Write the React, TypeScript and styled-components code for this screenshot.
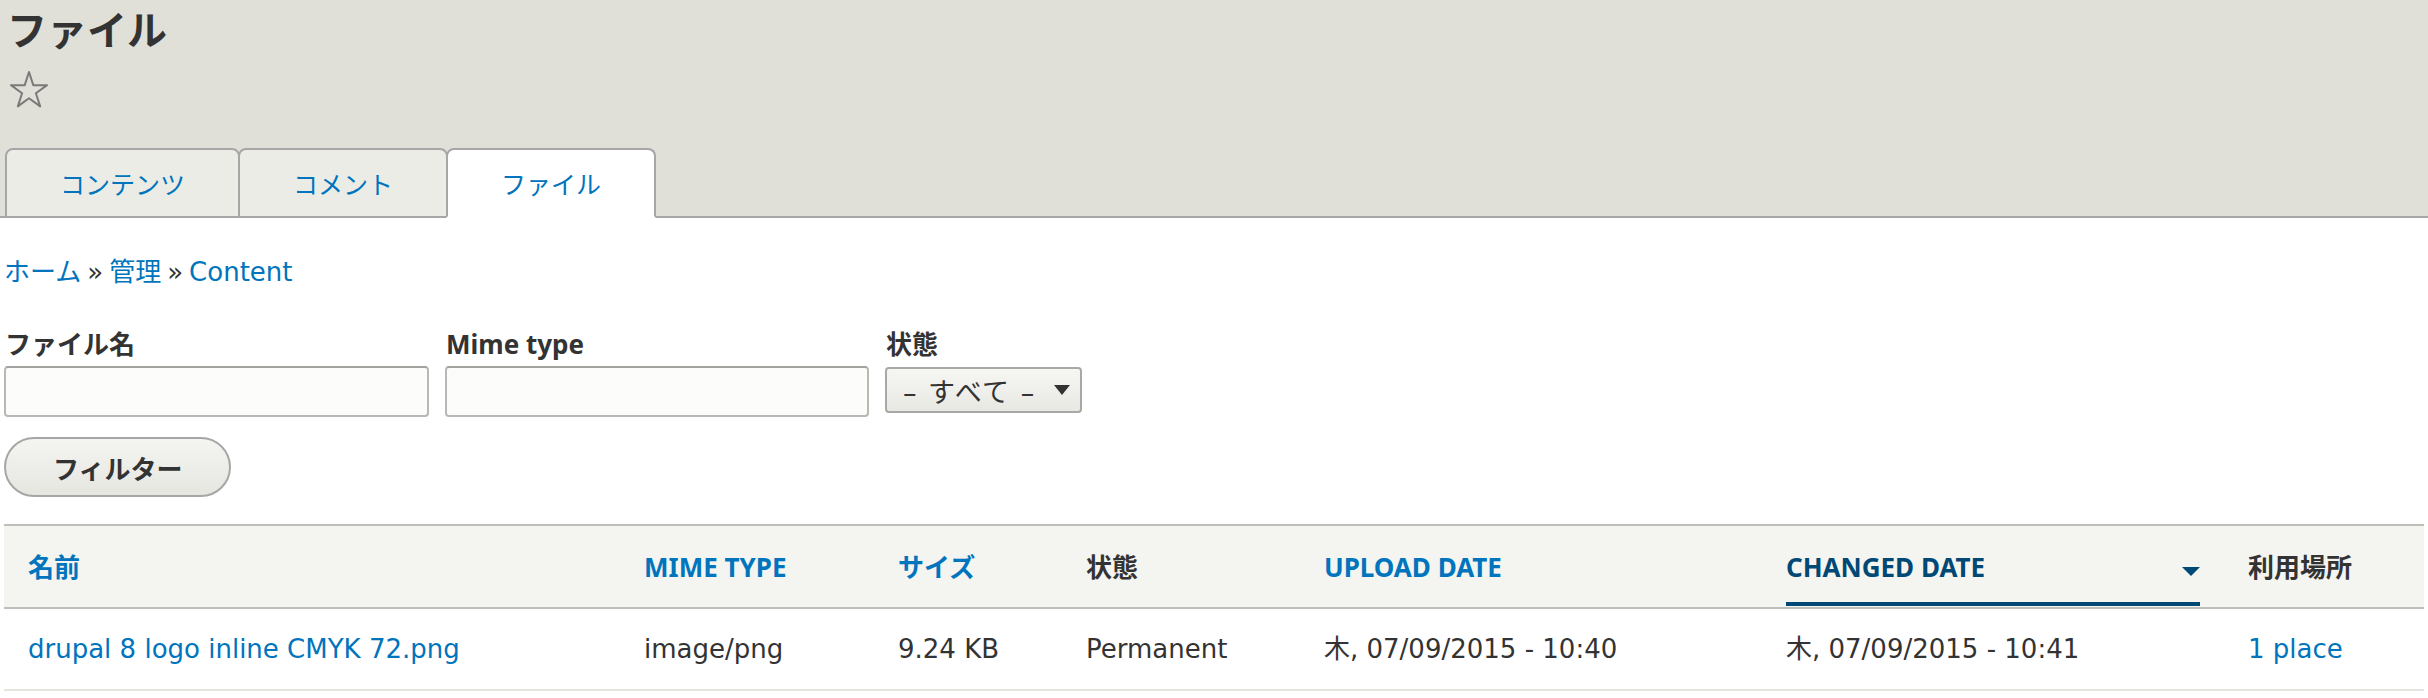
import React from "react";
import styled, { createGlobalStyle } from "styled-components";

const GlobalStyle = createGlobalStyle`
  html, body { margin: 0; padding: 0; background: #ffffff; }
  body {
    font-family: "DejaVu Sans", "Noto Sans CJK JP", sans-serif;
    font-size: 26px;
    color: #333333;
  }
  * { box-sizing: border-box; }
`;

const BOLD = `"Noto Sans", "Noto Sans CJK JP", sans-serif`;
const LINK = "#0074bd";

const Header = styled.header`
  background: #e0e0d8;
  border-bottom: 2px solid #a6a6a6;
  padding: 4px 4px 0 5px;
`;

const Title = styled.h1`
  margin: 0;
  padding-left: 2px;
  font-family: "Noto Sans CJK JP", sans-serif;
  font-weight: 700;
  font-size: 40px;
  line-height: 48px;
  color: #333333;
`;

const Shortcut = styled.div`
  margin-top: 18px;
  padding-left: 5px;
  height: 38px;
  display: flex;
  align-items: center;
`;

const Tabs = styled.nav`
  display: flex;
  margin-top: 40px;
  margin-bottom: -2px;
`;

const Tab = styled.a<{ $active?: boolean }>`
  display: flex;
  align-items: center;
  justify-content: center;
  height: 70px;
  padding: 0 53px;
  margin-left: -2px;
  &:first-child { margin-left: 0; }
  border: 2px solid #a6a6a6;
  border-bottom-color: ${(p) => (p.$active ? "#ffffff" : "#a6a6a6")};
  border-radius: 8px 8px 0 0;
  background: ${(p) => (p.$active ? "#ffffff" : "#ecece7")};
  position: relative;
  z-index: ${(p) => (p.$active ? 1 : 0)};
  font-family: "Noto Sans CJK JP", sans-serif;
  font-size: 25px;
  color: ${LINK};
  text-decoration: none;
  white-space: nowrap;
`;

const Main = styled.main`
  padding: 0 4px;
`;

const Breadcrumb = styled.nav`
  margin-top: 36px;
  line-height: 36px;
  font-size: 26px;
  color: #333333;
  white-space: nowrap;
`;

const Crumb = styled.a`
  color: ${LINK};
  text-decoration: none;
`;

const Sep = styled.span`
  padding: 0 6px;
  color: #333333;
`;

const FilterRow = styled.div`
  display: flex;
  gap: 16px;
  margin-top: 36px;
`;

const FormItem = styled.div`
  display: flex;
  flex-direction: column;
`;

const Label = styled.label`
  font-family: ${BOLD};
  font-weight: 700;
  font-size: 26px;
  line-height: 36px;
  padding-left: 1px;
  margin-bottom: 4px;
  color: #333333;
`;

const TextInput = styled.input<{ $w: number }>`
  width: ${(p) => p.$w}px;
  height: 51px;
  border: 2px solid #b8b8b4;
  border-top-color: #a2a29e;
  border-radius: 4px;
  background: #fcfcfa;
  font-size: 26px;
  padding: 0 10px;
  outline: none;
`;

const SelectBox = styled.div`
  width: 197px;
  height: 46px;
  margin-top: 1px;
  display: flex;
  align-items: center;
  justify-content: space-between;
  padding: 0 10px 0 16px;
  border: 2px solid #a8a8a8;
  border-radius: 4px;
  background: linear-gradient(#f6f6f3, #e8e8e3);
  font-family: "DejaVu Sans", "Noto Sans CJK JP", sans-serif;
  font-size: 27px;
  letter-spacing: 1.5px;
  color: #333333;
  white-space: nowrap;
`;

const Button = styled.button`
  margin-top: 20px;
  height: 60px;
  padding: 0 47px;
  border: 2px solid #a6a6a6;
  border-radius: 30px;
  background: linear-gradient(#f4f4f1, #e6e6e1);
  font-family: "Noto Sans CJK JP", sans-serif;
  font-weight: 700;
  font-size: 26px;
  color: #333333;
  cursor: pointer;
`;

const Table = styled.table`
  margin-top: 27px;
  width: 2420px;
  table-layout: fixed;
  border-collapse: separate;
  border-spacing: 0;
`;

const Th = styled.th<{ $active?: boolean; $w: number }>`
  width: ${(p) => p.$w}px;
  text-align: left;
  background: #f4f4f0;
  border-top: 2px solid #bfbfba;
  border-bottom: 2px solid #bfbfba;
  padding: ${(p) => (p.$active ? "23px 24px 1px" : "23px 24px 22px")};
  font-family: ${BOLD};
  font-weight: 700;
  font-size: 26px;
  line-height: 36px;
  color: #333333;
  white-space: nowrap;
`;

const SortLink = styled.a<{ $active?: boolean }>`
  display: ${(p) => (p.$active ? "flex" : "inline")};
  justify-content: space-between;
  align-items: center;
  color: ${(p) => (p.$active ? "#004875" : LINK)};
  text-decoration: none;
  ${(p) => (p.$active ? "padding-bottom: 17px; border-bottom: 4px solid #004875;" : "")}
`;

const SortArrow = styled.svg`
  margin-top: 8px;
  flex: none;
`;

const Td = styled.td`
  padding: 22px 24px;
  border-bottom: 2px solid #e6e4df;
  font-size: 26px;
  line-height: 36px;
  color: #333333;
  white-space: nowrap;
  overflow: hidden;
`;

const CellLink = styled.a`
  color: ${LINK};
  text-decoration: none;
`;

const Star = () => (
  <svg width="38" height="38" viewBox="-1 -1 38 38">
    <polygon
      points="18,1 22.27,14.13 36.07,14.13 24.9,22.24 29.17,35.37 18,27.26 6.83,35.37 11.1,22.24 -0.07,14.13 13.73,14.13"
      fill="none"
      stroke="#7a7a7a"
      strokeWidth="2"
      strokeLinejoin="round"
    />
  </svg>
);

export default function App() {
  return (
    <>
      <GlobalStyle />
      <Header>
        <Title>ファイル</Title>
        <Shortcut>
          <Star />
        </Shortcut>
        <Tabs>
          <Tab href="#">コンテンツ</Tab>
          <Tab href="#">コメント</Tab>
          <Tab href="#" $active>
            ファイル
          </Tab>
        </Tabs>
      </Header>
      <Main>
        <Breadcrumb>
          <Crumb href="#">ホーム</Crumb>
          <Sep>»</Sep>
          <Crumb href="#">管理</Crumb>
          <Sep>»</Sep>
          <Crumb href="#">Content</Crumb>
        </Breadcrumb>
        <FilterRow>
          <FormItem>
            <Label>ファイル名</Label>
            <TextInput $w={425} />
          </FormItem>
          <FormItem>
            <Label>Mime type</Label>
            <TextInput $w={424} />
          </FormItem>
          <FormItem>
            <Label>状態</Label>
            <SelectBox role="combobox">
              <span>– すべて –</span>
              <svg width="16" height="10" viewBox="0 0 16 10">
                <polygon points="0,0 16,0 8,10" fill="#333333" />
              </svg>
            </SelectBox>
          </FormItem>
        </FilterRow>
        <Button>フィルター</Button>
        <Table>
          <thead>
            <tr>
              <Th $w={616}>
                <SortLink href="#">名前</SortLink>
              </Th>
              <Th $w={254}>
                <SortLink href="#">MIME TYPE</SortLink>
              </Th>
              <Th $w={188}>
                <SortLink href="#">サイズ</SortLink>
              </Th>
              <Th $w={238}>状態</Th>
              <Th $w={462}>
                <SortLink href="#">UPLOAD DATE</SortLink>
              </Th>
              <Th $w={462} $active>
                <SortLink href="#" $active>
                  <span>CHANGED DATE</span>
                  <SortArrow width="18" height="9" viewBox="0 0 18 9">
                    <polygon points="0,0 18,0 9,9" fill="#004875" />
                  </SortArrow>
                </SortLink>
              </Th>
              <Th $w={200}>利用場所</Th>
            </tr>
          </thead>
          <tbody>
            <tr>
              <Td>
                <CellLink href="#">drupal 8 logo inline CMYK 72.png</CellLink>
              </Td>
              <Td>image/png</Td>
              <Td>9.24 KB</Td>
              <Td>Permanent</Td>
              <Td>木, 07/09/2015 - 10:40</Td>
              <Td>木, 07/09/2015 - 10:41</Td>
              <Td>
                <CellLink href="#">1 place</CellLink>
              </Td>
            </tr>
          </tbody>
        </Table>
      </Main>
    </>
  );
}
